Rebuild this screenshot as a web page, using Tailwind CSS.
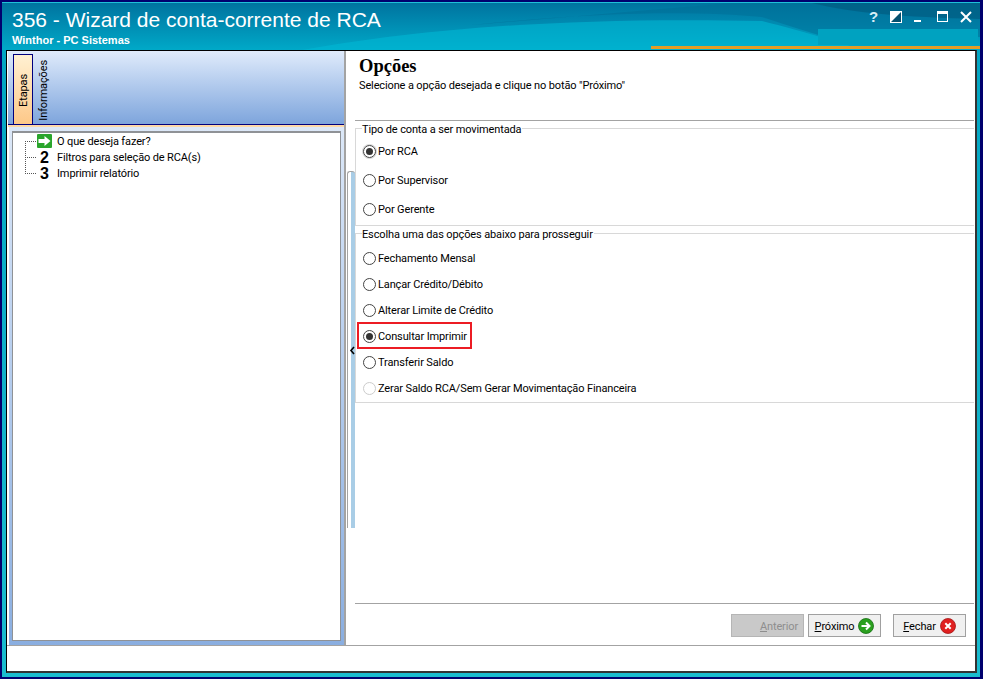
<!DOCTYPE html>
<html><head><meta charset="utf-8"><script src="https://cdn.jsdelivr.net/npm/@tailwindcss/browser@4"></script></head>
<body class="m-0 bg-[#00006e]">
<div class="w-[983px] h-[679px] overflow-hidden bg-[#00006e] pt-[2px] pl-[2px] pr-[3px] pb-[2px] font-['Roboto',sans-serif] text-[11px] tracking-[-0.13px] text-black">
<div class="relative w-full h-full bg-gradient-to-b from-[#00a4c2] to-[#1abccf] border-t-[1px] border-[#1fc0d8] flex flex-col overflow-hidden">
  <svg class="absolute left-0 top-0 w-[978px] h-[47px]" viewBox="0 0 978 47" preserveAspectRatio="none">
    <defs><linearGradient id="tg" x1="0" y1="0" x2="0" y2="1"><stop offset="0" stop-color="#00739f"/><stop offset="1" stop-color="#00a9c8"/></linearGradient></defs>
    <rect width="978" height="47" fill="url(#tg)"/>
    <path d="M300 47 C 420 26 560 14 760 18 C 800 28 840 40 860 47 Z" fill="#00b8d4" opacity=".6"/>
    <path d="M470 22 C 600 8 700 8 760 14 C 790 24 810 30 830 36 L 978 34 L 978 0 L 730 0 Z" fill="#006f97" opacity=".55"/>
    <path d="M810 0 C 850 10 900 14 978 16 L 978 0 Z" fill="#005d82" opacity=".7"/>
    <rect x="816" y="26" width="160" height="16" fill="#00a2c0"/>
    <rect x="649" y="43" width="329" height="3" fill="#e29d26"/>
  </svg>
  <header class="relative h-[47px] shrink-0 pl-[10px] pt-[5px] text-white tracking-normal font-['Liberation_Sans',sans-serif]">
    <div class="text-[21px] leading-[24px]">356 - Wizard de conta-corrente de RCA</div>
    <div class="text-[11px] leading-[14px] font-bold mt-[1px]">Winthor - PC Sistemas</div>
    <div class="absolute right-[8px] top-[8px] flex items-start h-[12px]">
      <span class="font-bold text-[15px] leading-[12px] text-[#d8eef6] w-[8px] text-center">?</span>
      <svg class="ml-[13px]" width="12" height="12" viewBox="0 0 12 12"><rect x=".5" y=".5" width="11" height="11" fill="#05506f"/><path d="M0 0H12L0 12z" fill="#fff"/><rect x=".5" y=".5" width="11" height="11" fill="none" stroke="#fff"/></svg>
      <svg class="ml-[12px]" width="8" height="12" viewBox="0 0 8 12"><rect x="0" y="9" width="7" height="2" fill="#fff"/></svg>
      <svg class="ml-[15px]" width="12" height="12" viewBox="0 0 12 12"><rect x=".5" y=".5" width="10" height="10" fill="none" stroke="#fff"/><rect x="0" y="0" width="11" height="3" fill="#fff"/></svg>
      <svg class="ml-[11px]" width="12" height="12" viewBox="0 0 12 12"><path d="M1 1l10 10M11 1L1 11" stroke="#fff" stroke-width="2"/></svg>
    </div>
  </header>
  <main class="relative flex-1 min-h-0 ml-[4px] mr-[3px] mb-[4px] bg-white border-t-[1px] border-l-[1px] border-r-[2px] border-b-[2px] border-t-black border-l-black border-r-[#333] border-b-[#333] flex flex-col">
    <div class="flex-1 min-h-0 flex border-b-[1px] border-[#a3a3a3]">
      <aside class="w-[338px] ml-[1px] shrink-0 flex flex-col border-r-[2px] border-[#a3a3a3]">
        <div class="h-[74px] shrink-0 flex items-stretch pl-[5px] pt-[3px] bg-gradient-to-b from-[#e0ebfb] to-[#7ea5dc] border-b-[1px] border-[#00007e]">
          <div class="w-[20px] pl-[1px] bg-gradient-to-b from-[#fff1d2] to-[#fdc888] border-l border-t border-r border-[#00007e] flex items-end justify-center pb-[17px]">
            <span class="[writing-mode:vertical-rl] rotate-180 leading-[16px]">Etapas</span>
          </div>
          <div class="w-[20px] pl-[1px] flex items-end justify-center pb-[3px]">
            <span class="[writing-mode:vertical-rl] rotate-180 leading-[16px]">Informações</span>
          </div>
        </div>
        <div class="h-[2px] bg-[#fdd9a8] shrink-0"></div>
        <div class="flex-1 min-h-0 ml-[1px] bg-gradient-to-b from-[#dce8f8] to-[#8aaee0] pt-[4px] px-[3px] pb-[4px]">
          <div class="relative h-full bg-white border border-t-2 border-[#8f9296] pl-[24px]">
            <div class="absolute left-[12px] top-[8px] h-[33px] w-[11px] border-l border-dotted border-[#555]"></div>
            <div class="relative flex items-center h-[16px]">
              <span class="absolute -left-[12px] top-[8px] w-[11px] border-t border-dotted border-[#555]"></span>
              <span class="w-[15px] h-[14px] mr-[5px] flex"><svg width="15" height="14" viewBox="0 0 15 14"><rect width="15" height="14" rx="1" fill="#2aa52c"/><path d="M1.500 5H7.500V2L13.500 7 7.500 12V9H1.500z" fill="#fff"/></svg></span>
              <span class="pt-[2px]">O que deseja fazer?</span>
            </div>
            <div class="relative flex items-center h-[16px]">
              <span class="absolute -left-[12px] top-[8px] w-[11px] border-t border-dotted border-[#555]"></span>
              <span class="w-[15px] mr-[5px] pt-[2px] text-center font-bold text-[16px] leading-[16px] font-['Liberation_Sans',sans-serif]">2</span><span class="pt-[2px]">Filtros para seleção de RCA(s)</span></div>
            <div class="relative flex items-center h-[16px]">
              <span class="absolute -left-[12px] top-[8px] w-[11px] border-t border-dotted border-[#555]"></span>
              <span class="w-[15px] mr-[5px] pt-[2px] text-center font-bold text-[16px] leading-[16px] font-['Liberation_Sans',sans-serif]">3</span><span class="pt-[2px]">Imprimir relatório</span></div>
          </div>
        </div>
      </aside>
      <div class="w-[9px] shrink-0 flex flex-col pt-[120px] pl-[1px]">
        <div class="relative h-[357px] w-[8px] rounded-t-[3px] border-l border-t border-[#a3a3a3] bg-gradient-to-r from-white from-40% to-[#a9cde6] to-40%">
          <svg class="absolute left-[1px] top-[174px]" width="6" height="9" viewBox="0 0 6 9"><path d="M5 1L2 4.500 5 8" stroke="#000" stroke-width="1.600" fill="none"/></svg>
        </div>
      </div>
      <section class="flex-1 min-w-0 mr-[1px] flex flex-col">
        <div class="h-[70px] shrink-0 pl-[4px] border-b border-[#a3a3a3]">
          <h2 class="font-['Liberation_Serif',serif] font-bold text-[18.5px] tracking-normal leading-[20px] mt-[5px]">Opções</h2>
          <p class="leading-[15px] mt-[2px]">Selecione a opção desejada e clique no botão "Próximo"</p>
        </div>
        <div class="h-[97px] mt-[7px] shrink-0 border-t border-l border-[#d8d8d8] flex flex-col pl-[7px]">
          <div class="-mt-[6px] -ml-[1px] bg-white w-fit leading-[14px] pr-[1px]">Tipo de conta a ser movimentada</div>
          <label class="flex items-center h-[29px] gap-[2px]"><span class="w-[13px] h-[13px] rounded-full border border-[#444] flex items-center justify-center shadow-[0_0_0_1px_#d8d8d8]"><span class="w-[7px] h-[7px] rounded-full bg-[#333]"></span></span><span class="pt-[2px]">Por RCA</span></label>
          <label class="flex items-center h-[29px] gap-[2px]"><span class="w-[13px] h-[13px] rounded-full border border-[#444]"></span><span class="pt-[2px]">Por Supervisor</span></label>
          <label class="flex items-center h-[29px] gap-[2px]"><span class="w-[13px] h-[13px] rounded-full border border-[#444]"></span><span class="pt-[2px]">Por Gerente</span></label>
        </div>
        <div class="h-[1px] bg-[#d8d8d8] shrink-0"></div>
        <div class="h-[170px] mt-[7px] shrink-0 border-t border-l border-b border-[#d8d8d8] flex flex-col pl-[7px]">
          <div class="-mt-[6px] -ml-[1px] bg-white w-fit leading-[14px] mb-[3px] pr-[1px]">Escolha uma das opções abaixo para prosseguir</div>
          <label class="flex items-center h-[26px] gap-[2px]"><span class="w-[13px] h-[13px] rounded-full border border-[#444]"></span><span class="pt-[2px]">Fechamento Mensal</span></label>
          <label class="flex items-center h-[26px] gap-[2px]"><span class="w-[13px] h-[13px] rounded-full border border-[#444]"></span><span class="pt-[2px]">Lançar Crédito/Débito</span></label>
          <label class="flex items-center h-[26px] gap-[2px]"><span class="w-[13px] h-[13px] rounded-full border border-[#444]"></span><span class="pt-[2px]">Alterar Limite de Crédito</span></label>
          <label class="relative flex items-center h-[26px] gap-[2px]"><span class="w-[13px] h-[13px] rounded-full border border-[#444] flex items-center justify-center"><span class="w-[7px] h-[7px] rounded-full bg-[#333]"></span></span><span class="pt-[2px]">Consultar Imprimir</span><span class="absolute -left-[6px] -top-[1px] w-[115px] h-[27px] border-2 border-[#ec1c24]"></span></label>
          <label class="flex items-center h-[26px] gap-[2px]"><span class="w-[13px] h-[13px] rounded-full border border-[#444]"></span><span class="pt-[2px]">Transferir Saldo</span></label>
          <label class="flex items-center h-[26px] gap-[2px]"><span class="w-[13px] h-[13px] rounded-full border border-[#ccc]"></span><span class="pt-[2px]">Zerar Saldo RCA/Sem Gerar Movimentação Financeira</span></label>
        </div>
        <div class="flex-1"></div>
        <div class="h-[42px] shrink-0 border-t border-[#a3a3a3] flex items-start justify-end pt-[10px] pr-[8px]">
          <button class="w-[73px] h-[23px] mr-[4px] bg-[#c9c9c9] border border-[#b5b5b5] text-[#8e8e8e] flex items-center justify-end pr-[5px]"><span class="pt-[4px]"><u>A</u>nterior</span></button>
          <button class="w-[73px] h-[23px] mr-[12px] bg-[#f0f0f0] border border-[#a0a0a0] flex items-center justify-center gap-[4px]"><span class="pt-[4px]"><u>P</u>róximo</span>
            <svg width="16" height="16" viewBox="0 0 16 16"><circle cx="8" cy="8" r="7.500" fill="#2ba01f" stroke="#136d10" stroke-width=".8"/><path d="M3.500 8h7.500M8 4.500L11.500 8 8 11.500" stroke="#fff" stroke-width="2" fill="none"/></svg></button>
          <button class="w-[73px] h-[23px] bg-[#f0f0f0] border border-[#a0a0a0] flex items-center justify-center gap-[4px]"><span class="pt-[4px]"><u>F</u>echar</span>
            <svg width="16" height="16" viewBox="0 0 16 16"><circle cx="8" cy="8" r="7.500" fill="#e02020" stroke="#a31515" stroke-width=".8"/><path d="M5.300 5.300l5.400 5.400M10.700 5.300l-5.400 5.400" stroke="#fff" stroke-width="2" fill="none"/></svg></button>
        </div>
      </section>
    </div>
    <div class="h-[25px] shrink-0 bg-white"></div>
  </main>
</div>
</div>
</body></html>
